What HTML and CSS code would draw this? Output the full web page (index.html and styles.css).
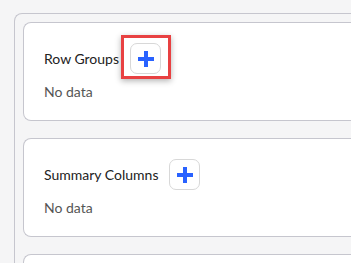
FILE: index.html
```html
<!DOCTYPE html>
<html lang="en">
<head>
    <meta charset="UTF-8">
    <meta name="viewport" content="width=device-width, initial-scale=1.0">
    <title>Pivot Panel</title>
    <link rel="stylesheet" href="styles.css">
</head>
<body>

    <div class="panel">
        <div class="card">
            <div class="card-head">
                <span class="card-title">Row Groups</span>
                <span class="add-wrap">
                    <button class="add-btn" aria-label="Add row group">
                        <svg width="16" height="16" viewBox="0 0 16 16"><path d="M6 0h4v6h6v4h-6v6H6v-6H0V6h6z" fill="#2962ff"/></svg>
                    </button>
                    <span class="highlight"></span>
                </span>
            </div>
            <div class="empty">No data</div>
        </div>

        <div class="card">
            <div class="card-head">
                <span class="card-title">Summary Columns</span>
                <button class="add-btn" aria-label="Add summary column">
                    <svg width="16" height="16" viewBox="0 0 16 16"><path d="M6 0h4v6h6v4h-6v6H6v-6H0V6h6z" fill="#2962ff"/></svg>
                </button>
            </div>
            <div class="empty">No data</div>
        </div>

        <div class="card"></div>
    </div>

</body>
</html>
```

FILE: styles.css
```css
body {
    margin: 0;
    background-color: #f5f5f6;
    font-family: Lato, "Open Sans", sans-serif;
    overflow: hidden;
}

.panel {
    margin: 13px 0 0 14px;
    padding: 8px 0 0 8px;
    border: 1px solid #c6c6ce;
    border-right: none;
    border-bottom: none;
    border-radius: 8px 0 0 0;
    background-color: #f5f5f6;
    display: flex;
    flex-direction: column;
    gap: 17px;
}

.card {
    height: 99px;
    box-sizing: border-box;
    padding: 20px 20px 0 20px;
    background: #ffffff;
    border: 1px solid #c6c6ce;
    border-right: none;
    border-radius: 8px 0 0 8px;
    flex-shrink: 0;
}

.card-head {
    display: flex;
    align-items: center;
    gap: 11px;
    height: 31px;
    margin-bottom: 9px;
}

.card-title {
    font-size: 14px;
    color: #222222;
}

.empty {
    font-size: 14px;
    line-height: 18px;
    color: #555555;
}

.add-wrap {
    position: relative;
    display: flex;
}

.add-btn {
    width: 31px;
    height: 31px;
    padding: 0;
    border: 1px solid #d8d8d8;
    border-radius: 7px;
    background: #ffffff;
    display: flex;
    align-items: center;
    justify-content: center;
    cursor: pointer;
}

.highlight {
    position: absolute;
    left: -9px;
    top: -8px;
    width: 50px;
    height: 44px;
    box-sizing: border-box;
    border: 3px solid #e84142;
    box-shadow: 0 2px 6px rgba(0, 0, 0, 0.3);
    pointer-events: none;
}
```
